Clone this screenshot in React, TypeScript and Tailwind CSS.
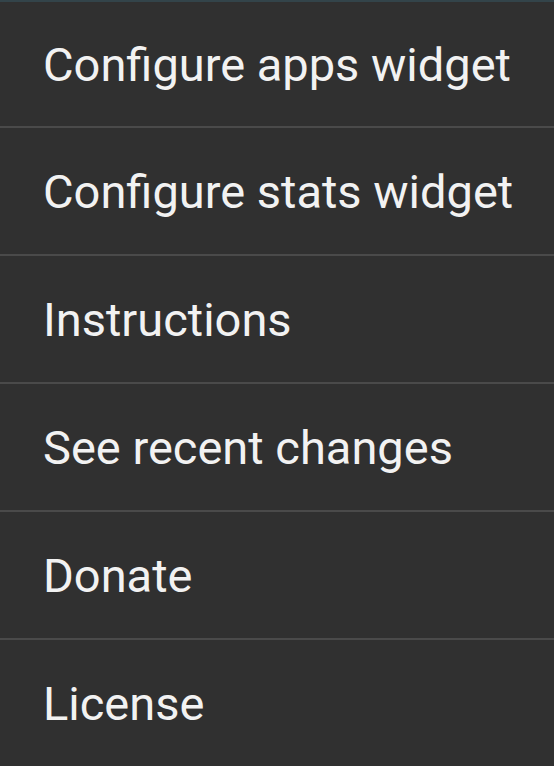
const items = [
  "Configure apps widget",
  "Configure stats widget",
  "Instructions",
  "See recent changes",
  "Donate",
  "License",
];

export default function App() {
  return (
    <div className="h-[766px] w-[554px] overflow-hidden bg-[#303030] font-['Roboto',sans-serif]">
      <div className="h-[2px] bg-[#33444a]" />
      {items.map((label, i) => (
        <div key={label}>
          <div
            className={`flex items-center pl-[43px] text-[47px] leading-none text-[#f2f2f2] ${
              i === 0 ? "h-[124px]" : "h-[126px]"
            }`}
          >
            {label}
          </div>
          {i < items.length - 1 && <div className="h-[2px] bg-[#4a4a4a]" />}
        </div>
      ))}
    </div>
  );
}
